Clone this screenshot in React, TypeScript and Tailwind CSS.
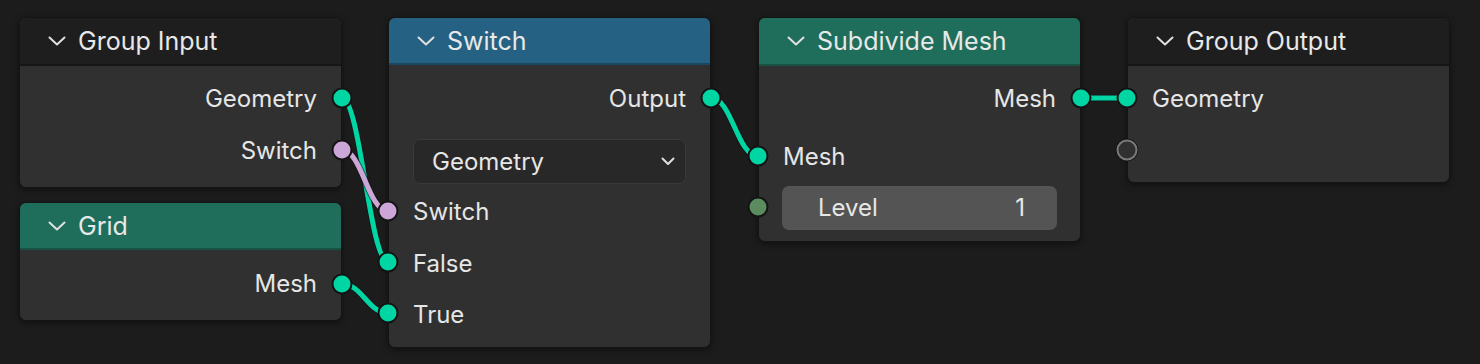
const TEAL = "#00d6a3";
const PINK = "#cca6d6";

const Chevron = () => (
    <svg width="18" height="10" viewBox="0 0 18 10" className="shrink-0">
        <path d="M1.5 1.5 L9 8.5 L16.5 1.5" fill="none" stroke="#e0e0e0" strokeWidth="2" strokeLinecap="round" strokeLinejoin="round" />
    </svg>
);

interface NodeProps {
    title: string;
    header: string;
    className?: string;
    bodyClass?: string;
    children: React.ReactNode;
}

const Node = ({ title, header, className = "", bodyClass = "", children }: NodeProps) => (
    <div className={`w-[323px] rounded-[7px] border border-[#141414] bg-[#303030] shadow-[0_2px_6px_rgba(0,0,0,0.45)] overflow-hidden ${className}`}>
        <div className={`${header} flex items-center gap-[12px] pl-[28px] border-b-2 border-black/25`}>
            <Chevron />
            <span className="text-[25px] text-[#e8e8e8] leading-none pt-[1px]">{title}</span>
        </div>
        <div className={bodyClass}>{children}</div>
    </div>
);

const OutRow = ({ label, h = "h-[52px]" }: { label: string; h?: string }) => (
    <div className={`${h} flex items-center justify-end pr-[24px] text-[24px] text-[#e6e6e6]`}>{label}</div>
);

const InRow = ({ label, h = "h-[52px]" }: { label: string; h?: string }) => (
    <div className={`${h} flex items-center pl-[24px] text-[24px] text-[#e6e6e6]`}>{label}</div>
);

const Socket = ({ x, y, color }: { x: number; y: number; color: string }) => (
    <circle cx={x} cy={y} r="9.5" fill={color} stroke="#141414" strokeWidth="2" />
);

const Wire = ({ d, color }: { d: string; color: string }) => (
    <>
        <path d={d} fill="none" stroke="#141414" strokeWidth="7" strokeLinecap="round" opacity="0.6" />
        <path d={d} fill="none" stroke={color} strokeWidth="5" strokeLinecap="round" />
    </>
);

export default function App() {
    return (
        <div className="relative w-[1480px] h-[364px] bg-[#1c1c1c] overflow-hidden" style={{ fontFamily: "Inter, 'Noto Sans', sans-serif" }}>
            <div className="flex items-start pl-[19px] pt-[17px]">
                <div className="flex flex-col gap-[14px]">
                    <Node title="Group Input" header="h-[48px] bg-[#1e1e1e]" bodyClass="pt-[7px] pb-[10px]">
                        <OutRow label="Geometry" />
                        <OutRow label="Switch" />
                    </Node>
                    <Node title="Grid" header="h-[47px] bg-[#1f6e5b]" bodyClass="pt-[8px] pb-[10px]">
                        <OutRow label="Mesh" />
                    </Node>
                </div>

                <Node title="Switch" header="h-[47px] bg-[#246182]" className="ml-[46px]" bodyClass="pt-[8px] pb-[7px]">
                    <OutRow label="Output" />
                    <div className="px-[24px] mt-[14px]">
                        <div className="h-[45px] rounded-[7px] border border-[#3a3a3a] bg-[#282828] flex items-center justify-between pl-[18px] pr-[10px] text-[24px] text-[#e6e6e6]">
                            <span>Geometry</span>
                            <svg width="14" height="9" viewBox="0 0 14 9">
                                <path d="M1.5 1.5 L7 7 L12.5 1.5" fill="none" stroke="#e0e0e0" strokeWidth="2" strokeLinecap="round" strokeLinejoin="round" />
                            </svg>
                        </div>
                    </div>
                    <InRow label="Switch" h="h-[52px] mt-[2px]" />
                    <InRow label="False" h="h-[51px]" />
                    <InRow label="True" h="h-[51px]" />
                </Node>

                <Node title="Subdivide Mesh" header="h-[48px] bg-[#1f6e5b]" className="ml-[47px]" bodyClass="pt-[7px] pb-[11px]">
                    <OutRow label="Mesh" />
                    <InRow label="Mesh" h="h-[52px] mt-[6px]" />
                    <div className="px-[23px] mt-[3px]">
                        <div className="h-[44px] rounded-[7px] bg-[#545454] flex items-center justify-between pl-[36px] pr-[32px] text-[24px] text-[#e6e6e6]">
                            <span>Level</span>
                            <span>1</span>
                        </div>
                    </div>
                </Node>

                <Node title="Group Output" header="h-[48px] bg-[#1e1e1e]" className="ml-[46px]" bodyClass="pt-[7px] pb-[5px]">
                    <InRow label="Geometry" />
                    <div className="h-[52px]" />
                </Node>
            </div>

            <svg className="absolute inset-0 pointer-events-none" width="1480" height="364" viewBox="0 0 1480 364">
                <Wire d="M342 98 C360 98 370 262 388 262" color={TEAL} />
                <Wire d="M342 150 C362 150 368 211 388 211" color={PINK} />
                <Wire d="M342 284 C362 284 368 313 388 313" color={TEAL} />
                <Wire d="M711 98 C732 98 737 156 758 156" color={TEAL} />
                <Wire d="M1081 98 L1127 98" color={TEAL} />

                <Socket x={342} y={98} color={TEAL} />
                <Socket x={342} y={150} color={PINK} />
                <Socket x={342} y={284} color={TEAL} />
                <Socket x={711} y={98} color={TEAL} />
                <Socket x={388} y={211} color={PINK} />
                <Socket x={388} y={262} color={TEAL} />
                <Socket x={388} y={313} color={TEAL} />
                <Socket x={758} y={156} color={TEAL} />
                <Socket x={758} y={207} color="#5a8c5f" />
                <Socket x={1081} y={98} color={TEAL} />
                <Socket x={1127} y={98} color={TEAL} />
                <circle cx={1127} cy={150} r="10.5" fill="#303030" stroke="#141414" strokeWidth="1.5" />
                <circle cx={1127} cy={150} r="9.5" fill="none" stroke="#7a7a7a" strokeWidth="2" />
            </svg>
        </div>
    );
}
